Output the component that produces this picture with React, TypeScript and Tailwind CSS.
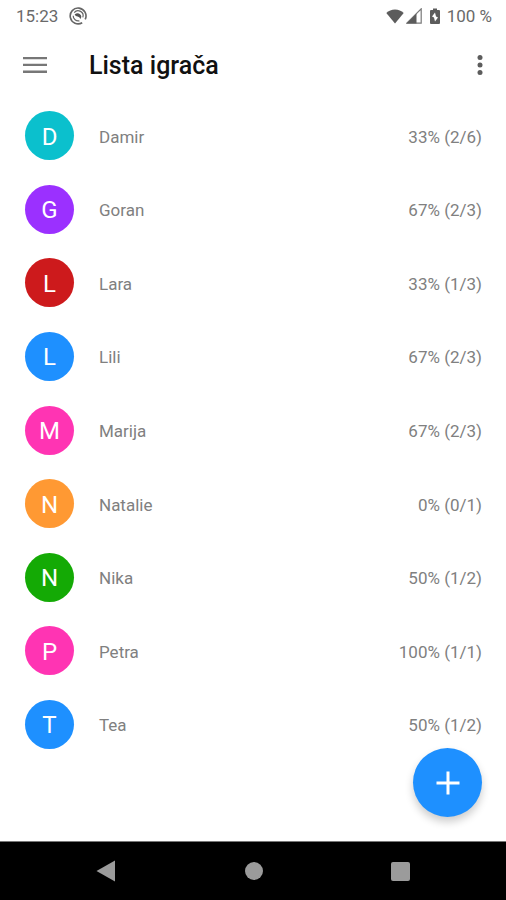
type Player = { name: string; score: string; color: string };

const players: Player[] = [
  { name: "Damir", score: "33% (2/6)", color: "bg-[#0bc0cd]" },
  { name: "Goran", score: "67% (2/3)", color: "bg-[#9b30ff]" },
  { name: "Lara", score: "33% (1/3)", color: "bg-[#cd1a1c]" },
  { name: "Lili", score: "67% (2/3)", color: "bg-[#1e90ff]" },
  { name: "Marija", score: "67% (2/3)", color: "bg-[#ff34b3]" },
  { name: "Natalie", score: "0% (0/1)", color: "bg-[#ff9933]" },
  { name: "Nika", score: "50% (1/2)", color: "bg-[#14aa05]" },
  { name: "Petra", score: "100% (1/1)", color: "bg-[#ff34b3]" },
  { name: "Tea", score: "50% (1/2)", color: "bg-[#1e90ff]" },
];

function StatusBar() {
  return (
    <div className="flex h-8 items-center justify-between pr-[14px] pl-4 text-[17px] leading-8 text-[#6a6a6a]">
      <div className="flex items-center gap-[11px]">
        <span>15:23</span>
        <svg width="18" height="18" viewBox="0 0 18 18" fill="none" stroke="#666" aria-hidden="true">
          <path d="M16.2 12.4A7.9 7.9 0 1 0 13.2 15.7" strokeWidth="1.6" />
          <path d="M5.2 5.6A5 5 0 0 1 13.8 10.4" strokeWidth="1.2" />
          <path d="M4.2 8.8A5 5 0 0 0 10.4 13.8" strokeWidth="1.2" />
          <path d="M5.6 7.4Q8.6 5.2 11 7.2T11.4 12Q10.6 9.6 8.6 9.4T5.6 7.4Z" fill="#555" stroke="none" />
        </svg>
      </div>
      <div className="flex items-center">
        <svg width="18" height="15" viewBox="0 0 18 15" fill="#5c5c5c" aria-hidden="true">
          <path d="M9 14.5L0.3 4C2.6 1.8 5.6 0.6 9 0.6S15.4 1.8 17.7 4Z" />
        </svg>
        <svg className="ml-[2px]" width="16" height="16" viewBox="0 0 16 16" aria-hidden="true">
          <path d="M0.8 15.2L15.2 0.8V15.2Z" fill="none" stroke="#7a7a7a" strokeWidth="1.2" />
          <path d="M0.5 15.5L10.5 5.5V15.5Z" fill="#5c5c5c" />
        </svg>
        <svg className="mr-[7px] ml-2" width="10" height="16" viewBox="0 0 10 16" aria-hidden="true">
          <path d="M3 0.5H7V2H9Q10 2 10 3V15Q10 16 9 16H1Q0 16 0 15V3Q0 2 1 2H3Z" fill="#5c5c5c" />
          <path d="M5 4.5L2 8.6L4 9.4L5 13.5L8 9.4L6 8.6Z" fill="#fff" />
        </svg>
        <span>100 %</span>
      </div>
    </div>
  );
}

function AppBar() {
  return (
    <header className="flex h-[66px] items-center px-[23px]">
      <button type="button" aria-label="Menu" className="flex">
        <svg width="24" height="18" viewBox="0 0 24 18" fill="#777">
          <path d="M0 1H24V3.3H0ZM0 7.8H24V10.1H0ZM0 14.6H24V16.9H0Z" />
        </svg>
      </button>
      <h1 className="ml-[42px] flex-1 pt-0.5 text-[25px] leading-8 font-medium text-[#111]">Lista igrača</h1>
      <button type="button" aria-label="More options" className="flex">
        <svg width="6" height="20" viewBox="0 0 6 20" fill="#5c5c5c">
          <circle cx="3" cy="2.5" r="2.5" />
          <circle cx="3" cy="10" r="2.5" />
          <circle cx="3" cy="17.5" r="2.5" />
        </svg>
      </button>
    </header>
  );
}

function PlayerRow({ name, score, color }: Player) {
  return (
    <li className="flex flex-1 items-center pr-6 pl-[25px] text-[17px] leading-6 text-[#808080]">
      <span
        aria-hidden="true"
        className={`flex size-[49px] items-center justify-center rounded-full pt-0.5 text-[24px] leading-8 text-white ${color}`}
      >
        {name[0]}
      </span>
      <span className="ml-[25px] flex-1 pt-0.5">{name}</span>
      <span className="pt-0.5">{score}</span>
    </li>
  );
}

function NavigationBar() {
  return (
    <nav className="flex h-[59px] items-center justify-between border-t border-[#777] bg-black px-24">
      <button type="button" aria-label="Back" className="flex">
        <svg width="20" height="22" viewBox="0 0 20 22" fill="#9b9b9b">
          <path d="M19 0.5V21.5L0.5 11Z" />
        </svg>
      </button>
      <button type="button" aria-label="Home" className="size-[18px] rounded-full bg-[#9b9b9b]" />
      <button type="button" aria-label="Recent apps" className="size-[19px] rounded-xs bg-[#9b9b9b]" />
    </nav>
  );
}

export default function App() {
  return (
    <div className="flex min-h-screen flex-col bg-white font-['Roboto','Noto_Sans',sans-serif]">
      <StatusBar />
      <AppBar />
      <main className="relative flex flex-1 flex-col pt-px pb-20">
        <ul className="flex flex-1 flex-col">
          {players.map((player) => (
            <PlayerRow key={player.name} {...player} />
          ))}
        </ul>
        <button
          type="button"
          aria-label="Add player"
          className="absolute right-6 bottom-6 flex size-[69px] items-center justify-center rounded-full bg-[#1e90ff] shadow-[0_5px_9px_rgba(0,0,0,0.2)]"
        >
          <svg width="24" height="24" viewBox="0 0 24 24" fill="#fff">
            <path d="M10.5 0.5H13.5V10.5H23.5V13.5H13.5V23.5H10.5V13.5H0.5V10.5H10.5Z" />
          </svg>
        </button>
      </main>
      <NavigationBar />
    </div>
  );
}
